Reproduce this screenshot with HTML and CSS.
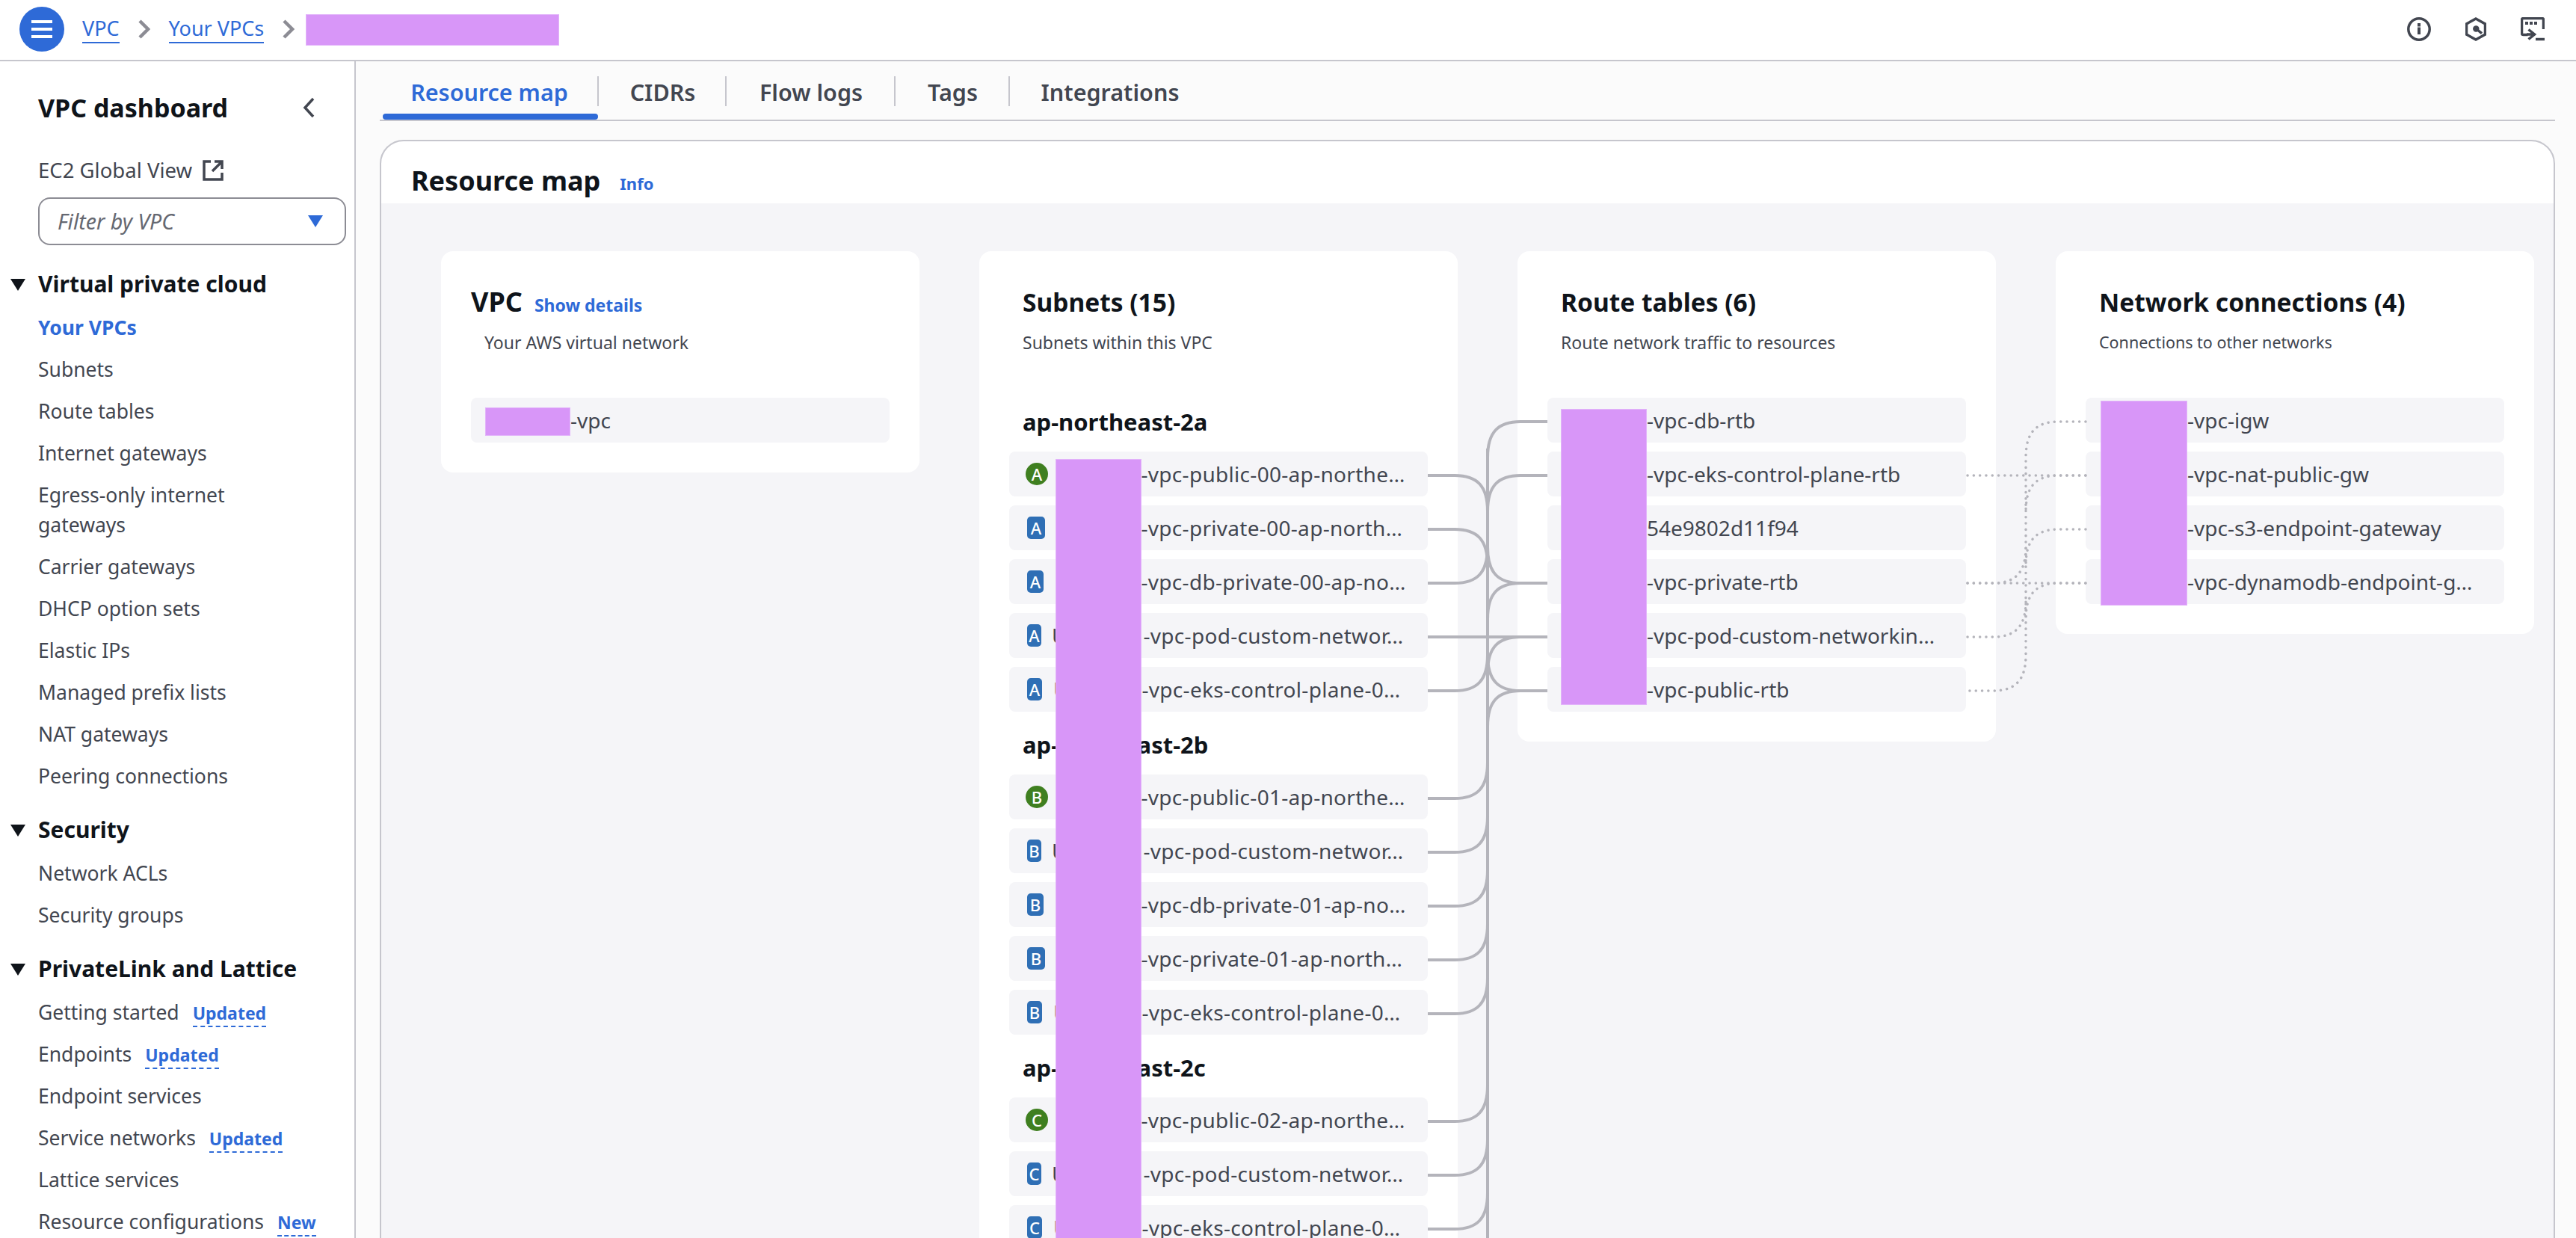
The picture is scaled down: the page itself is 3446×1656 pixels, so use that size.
FILE: index.html
```html
<!DOCTYPE html>
<html lang="en">
<head>
<meta charset="utf-8">
<title>Resource map</title>
<link rel="stylesheet" href="styles.css">
</head>
<body>
<header class="topbar">
  <button class="menu-btn" aria-label="Menu">
    <svg width="28" height="24" viewBox="0 0 28 24"><path d="M0 2h28M0 12h28M0 22h28" stroke="#fff" stroke-width="4" fill="none"/></svg>
  </button>
  <nav class="crumbs">
    <a class="crumb">VPC</a>
    <svg class="crumb-sep" width="16" height="26" viewBox="0 0 16 26"><path d="M2 2l11 11L2 24" stroke="#8c8c94" stroke-width="4.5" fill="none"/></svg>
    <a class="crumb">Your VPCs</a>
    <svg class="crumb-sep" width="16" height="26" viewBox="0 0 16 26"><path d="M2 2l11 11L2 24" stroke="#8c8c94" stroke-width="4.5" fill="none"/></svg>
    <span class="redact redact-crumb"></span>
  </nav>
  <div class="top-icons">
    <svg width="32" height="32" viewBox="0 0 32 32"><circle cx="16" cy="16" r="14.200" stroke="#424650" stroke-width="3.500" fill="none"/><path d="M14 8h4v4.500h-4zM14 13.500h4V23h-4z" fill="#424650"/></svg>
    <svg width="28" height="32" viewBox="0 0 28 32"><path d="M14 2l12.500 7v14L14 30 1.500 23V9z" stroke="#424650" stroke-width="3.500" fill="none"/><circle cx="14.300" cy="15.500" r="4.200" fill="#424650"/><path d="M15 16l7 5.600" stroke="#424650" stroke-width="3.500"/></svg>
    <svg width="32" height="32" viewBox="0 0 32 32"><path d="M30.500 16V3.500a2 2 0 0 0-2-2h-25a2 2 0 0 0-2 2v18a2 2 0 0 0 2 2h6" stroke="#424650" stroke-width="3.500" fill="none"/><path d="M6 6h4v4H6zM12 6h4v4h-4zM18 6h4v4h-4z" fill="#424650"/><path d="M8 23h10M10.500 16.500l8 6.500-8 6.500" stroke="#424650" stroke-width="3.500" fill="none"/><path d="M20 29.500h12" stroke="#424650" stroke-width="3.500"/></svg>
  </div>
</header>
<div class="page">
  <aside class="sidenav">
    <div class="nav-title-row">
      <h2 class="nav-title">VPC dashboard</h2>
      <svg width="18" height="28" viewBox="0 0 18 28"><path d="M15 2L4 14l11 12" stroke="#424650" stroke-width="3.500" fill="none"/></svg>
    </div>
    <div class="global-link">EC2 Global View
      <svg width="28" height="28" viewBox="0 0 28 28"><path d="M11 2H2v24h24v-9M16 2h10v10M26 2L13 15" stroke="#424650" stroke-width="3.500" fill="none"/></svg>
    </div>
    <div class="filter"><span class="filter-text">Filter by VPC</span><span class="caret-blue"></span></div>

    <div class="nav-sec sec-first"><span class="caret-dark"></span>Virtual private cloud</div>
    <a class="nav-item active">Your VPCs</a>
    <a class="nav-item">Subnets</a>
    <a class="nav-item">Route tables</a>
    <a class="nav-item">Internet gateways</a>
    <a class="nav-item">Egress-only internet gateways</a>
    <a class="nav-item">Carrier gateways</a>
    <a class="nav-item">DHCP option sets</a>
    <a class="nav-item">Elastic IPs</a>
    <a class="nav-item">Managed prefix lists</a>
    <a class="nav-item">NAT gateways</a>
    <a class="nav-item">Peering connections</a>

    <div class="nav-sec"><span class="caret-dark"></span>Security</div>
    <a class="nav-item">Network ACLs</a>
    <a class="nav-item">Security groups</a>

    <div class="nav-sec"><span class="caret-dark"></span>PrivateLink and Lattice</div>
    <a class="nav-item">Getting started<span class="tag">Updated</span></a>
    <a class="nav-item">Endpoints<span class="tag">Updated</span></a>
    <a class="nav-item">Endpoint services</a>
    <a class="nav-item">Service networks<span class="tag">Updated</span></a>
    <a class="nav-item">Lattice services</a>
    <a class="nav-item">Resource configurations<span class="tag">New</span></a>
  </aside>

  <main class="content">
    <div class="tabs">
      <div class="tab active"><span>Resource map</span></div>
      <div class="tab"><span>CIDRs</span></div>
      <div class="tab"><span>Flow logs</span></div>
      <div class="tab"><span>Tags</span></div>
      <div class="tab last"><span>Integrations</span></div>
    </div>

    <section class="panel">
      <div class="panel-head"><h2 class="panel-title">Resource map</h2><a class="info">Info</a></div>
      <div class="map">
        <div class="col">
          <div class="col-head"><h3 class="col-title title-vpc">VPC</h3><a class="show">Show details</a></div>
          <p class="col-sub">Your AWS virtual network</p>
          <div class="rows">
            <div class="row row-vpc"><span class="pre pre-vpc"></span><span class="name">-vpc</span><span class="redact redact-vpc"></span></div>
          </div>
        </div>

        <div class="col">
          <h3 class="col-title col-pad">Subnets (15)</h3>
          <p class="col-sub">Subnets within this VPC</p>
          <h4 class="az az-first">ap-northeast-2a</h4>
          <div class="rows">
            <div class="row sn"><span class="slot"><i class="b pub">A</i></span><span class="pre"></span><span class="name">-vpc-public-00-ap-northe…</span></div>
            <div class="row sn"><span class="slot"><i class="b w24">A</i></span><span class="pre"></span><span class="name">-vpc-private-00-ap-north…</span></div>
            <div class="row sn"><span class="slot"><i class="b w22">A</i></span><span class="pre"></span><span class="name">-vpc-db-private-00-ap-no…</span></div>
            <div class="row sn"><span class="slot"><i class="b w19">A</i></span><span class="pre pre-pod">U</span><span class="name">-vpc-pod-custom-networ…</span></div>
            <div class="row sn"><span class="slot"><i class="b w20">A</i></span><span class="pre pre-eks">U</span><span class="name">-vpc-eks-control-plane-0…</span></div>
          </div>
          <h4 class="az az-next">ap-northeast-2b</h4>
          <div class="rows">
            <div class="row sn"><span class="slot"><i class="b pub">B</i></span><span class="pre"></span><span class="name">-vpc-public-01-ap-northe…</span></div>
            <div class="row sn"><span class="slot"><i class="b w19">B</i></span><span class="pre pre-pod">U</span><span class="name">-vpc-pod-custom-networ…</span></div>
            <div class="row sn"><span class="slot"><i class="b w22">B</i></span><span class="pre"></span><span class="name">-vpc-db-private-01-ap-no…</span></div>
            <div class="row sn"><span class="slot"><i class="b w24">B</i></span><span class="pre"></span><span class="name">-vpc-private-01-ap-north…</span></div>
            <div class="row sn"><span class="slot"><i class="b w20">B</i></span><span class="pre pre-eks">U</span><span class="name">-vpc-eks-control-plane-0…</span></div>
          </div>
          <h4 class="az az-next">ap-northeast-2c</h4>
          <div class="rows">
            <div class="row sn"><span class="slot"><i class="b pub">C</i></span><span class="pre"></span><span class="name">-vpc-public-02-ap-northe…</span></div>
            <div class="row sn"><span class="slot"><i class="b w19">C</i></span><span class="pre pre-pod">U</span><span class="name">-vpc-pod-custom-networ…</span></div>
            <div class="row sn"><span class="slot"><i class="b w20">C</i></span><span class="pre pre-eks">U</span><span class="name">-vpc-eks-control-plane-0…</span></div>
          </div>
          <span class="redact redact-sn"></span>
        </div>

        <div class="col">
          <h3 class="col-title col-pad">Route tables (6)</h3>
          <p class="col-sub">Route network traffic to resources</p>
          <div class="rows">
            <div class="row"><span class="pre pre-rt"></span><span class="name">-vpc-db-rtb</span></div>
            <div class="row"><span class="pre pre-rt"></span><span class="name">-vpc-eks-control-plane-rtb</span></div>
            <div class="row"><span class="pre pre-rt"></span><span class="name">54e9802d11f94</span></div>
            <div class="row"><span class="pre pre-rt"></span><span class="name">-vpc-private-rtb</span></div>
            <div class="row"><span class="pre pre-rt"></span><span class="name">-vpc-pod-custom-networkin…</span></div>
            <div class="row"><span class="pre pre-rt"></span><span class="name">-vpc-public-rtb</span></div>
          </div>
          <span class="redact redact-rt"></span>
        </div>

        <div class="col">
          <h3 class="col-title col-pad">Network connections (4)</h3>
          <p class="col-sub sub-net">Connections to other networks</p>
          <div class="rows">
            <div class="row"><span class="pre pre-net"></span><span class="name">-vpc-igw</span></div>
            <div class="row"><span class="pre pre-net"></span><span class="name">-vpc-nat-public-gw</span></div>
            <div class="row"><span class="pre pre-net"></span><span class="name">-vpc-s3-endpoint-gateway</span></div>
            <div class="row"><span class="pre pre-net"></span><span class="name">-vpc-dynamodb-endpoint-g…</span></div>
          </div>
          <span class="redact redact-net"></span>
        </div>

        <svg class="links" width="1600" height="1400" viewBox="1900 532 1600 1400">
          <g class="solid">
            <path d="M1990 600V1700"/>
            <path d="M2070 564H2034C2004 564 1990 578 1990 612"/>
            <path d="M2070 636H2034C2004 636 1990 650 1990 684"/>
            <path d="M1990 732C1990 766 2004 780 2034 780H2070"/>
            <path d="M1990 828C1990 794 2004 780 2034 780"/>
            <path d="M1910 852H2070"/>
            <path d="M1990 900C1990 866 2004 852 2034 852"/>
            <path d="M1990 876C1990 910 2004 924 2034 924H2070"/>
            <path d="M1990 972C1990 938 2004 924 2034 924"/>
            <path d="M1910 636H1946C1976 636 1990 650 1990 684"/>
            <path d="M1910 708H1946C1976 708 1990 722 1990 756"/>
            <path d="M1910 780H1946C1976 780 1990 766 1990 732"/>
            <path d="M1910 924H1946C1976 924 1990 910 1990 876"/>
            <path d="M1910 1068H1946C1976 1068 1990 1054 1990 1020"/>
            <path d="M1910 1140H1946C1976 1140 1990 1126 1990 1092"/>
            <path d="M1910 1212H1946C1976 1212 1990 1198 1990 1164"/>
            <path d="M1910 1284H1946C1976 1284 1990 1270 1990 1236"/>
            <path d="M1910 1356H1946C1976 1356 1990 1342 1990 1308"/>
            <path d="M1910 1500H1946C1976 1500 1990 1486 1990 1452"/>
            <path d="M1910 1572H1946C1976 1572 1990 1558 1990 1524"/>
            <path d="M1910 1644H1946C1976 1644 1990 1630 1990 1596"/>
          </g>
          <g class="dotted">
            <path d="M2790 564H2754C2724 564 2710 578 2710 612V876C2710 910 2696 924 2666 924H2632"/>
            <path d="M2632 636H2790"/>
            <path d="M2790 636H2754C2724 636 2710 650 2710 684"/>
            <path d="M2790 708H2754C2724 708 2710 722 2710 756"/>
            <path d="M2632 780H2790"/>
            <path d="M2632 780H2666C2696 780 2710 766 2710 732"/>
            <path d="M2790 780H2754C2724 780 2710 794 2710 828"/>
            <path d="M2632 852H2666C2696 852 2710 838 2710 804"/>
          </g>
        </svg>
      </div>
    </section>
  </main>
</div>
</body>
</html>
```
FILE: styles.css
```css
* { box-sizing: border-box; }
html, body { margin: 0; padding: 0; width: 3446px; height: 1656px; overflow: hidden; }
body { font-family: "Noto Sans", "Open Sans", sans-serif; font-size: 28px; line-height: 40px; color: #424650; background: #fff; }
h2, h3, h4, p { margin: 0; }

.redact { position: absolute; background: #d896f8; border: 1px solid #e2b4fa; display: block; }

.topbar { height: 82px; border-bottom: 2px solid #c6c6cd; display: flex; align-items: center; padding: 0 42px 2px 26px; background: #fff; }
.menu-btn { width: 60px; height: 60px; border-radius: 50%; border: 0; padding: 0; background: #2e6ad7; display: flex; align-items: center; justify-content: center; flex: none; }
.crumbs { display: flex; align-items: center; margin-left: 24px; gap: 25px; flex: 1; position: relative; }
.crumb { color: #2e6ad7; border-bottom: 2px solid #2e6ad7; line-height: 36px; font-size: 27px; }
.crumb-sep { flex: none; }
.redact-crumb { left: 299px; top: -1px; width: 339px; height: 42px; }
.top-icons { display: flex; gap: 46px; align-items: center; }

.page { display: flex; height: 1574px; overflow: hidden; }
.sidenav { width: 476px; flex: none; border-right: 2px solid #c6c6cd; padding: 40px 12px 0 51px; background: #fff; overflow: hidden; }
.nav-title-row { display: flex; justify-content: space-between; align-items: center; height: 44px; padding-right: 40px; }
.nav-title { font-size: 34px; line-height: 44px; font-weight: 700; color: #0f141a; }
.global-link { margin-top: 42px; display: flex; align-items: center; gap: 14px; font-size: 27.500px; }
.filter { margin-top: 16px; width: 412px; height: 64px; border: 2px solid #8c8c94; border-radius: 16px; display: flex; align-items: center; justify-content: space-between; padding: 0 29px 0 24px; }
.filter-text { font-style: italic; color: #656871; font-size: 28.500px; }
.caret-blue { width: 0; height: 0; border-left: 10px solid transparent; border-right: 10px solid transparent; border-top: 16px solid #2e6ad7; }
.nav-sec { position: relative; font-size: 30px; line-height: 44px; font-weight: 700; color: #0f141a; margin-top: 30px; margin-bottom: 16px; }
.sec-first { margin-top: 30px; margin-bottom: 16px; }
.caret-dark { position: absolute; left: -37px; top: 15px; width: 0; height: 0; border-left: 10px solid transparent; border-right: 10px solid transparent; border-top: 16px solid #0f141a; }
.nav-item { display: block; color: #424650; font-size: 26.500px; margin-bottom: 16px; width: 340px; white-space: normal; }
.nav-item:has(.tag) { width: 420px; white-space: nowrap; }
.nav-item.active { color: #2e6ad7; font-weight: 700; }
.tag { margin-left: 18px; color: #2e6ad7; font-size: 23px; font-weight: 700; border-bottom: 2px dashed #2e6ad7; line-height: 34px; display: inline-block; }

.content { flex: 1; background: #fbfbfb; padding: 0 28px 0 32px; min-width: 0; overflow: hidden; }
.tabs { display: flex; height: 80px; border-bottom: 2px solid #c6c6cd; }
.tab { height: 78px; padding: 20px 0 0 0; position: relative; font-size: 30.500px; font-weight: 600; color: #424650; line-height: 42px; display: flex; justify-content: center; }
.tab:nth-child(1) { width: 293px; color: #2e6ad7; }
.tab:nth-child(2) { width: 171px; }
.tab:nth-child(3) { width: 226px; }
.tab:nth-child(4) { width: 153px; }
.tab:nth-child(5) { width: 268px; }
.tab::after { content: ""; position: absolute; right: 0; top: 20px; height: 40px; width: 2px; background: #c6c6cd; }
.tab.last::after { display: none; }
.tab.active::before { content: ""; position: absolute; left: 4px; right: 1px; bottom: 0; height: 8px; border-radius: 4px; background: #2e6ad7; }

.panel { margin-top: 25px; height: 1500px; border: 2px solid #c6c6cd; border-radius: 32px; overflow: hidden; background: #fff; }
.panel-head { height: 83px; display: flex; align-items: center; padding: 22px 0 0 40px; gap: 26px; }
.panel-title { font-size: 36px; line-height: 44px; font-weight: 700; color: #0f141a; }
.info { color: #2e6ad7; font-size: 22px; font-weight: 700; margin-top: 6px; }
.map { position: relative; display: flex; gap: 80px; align-items: flex-start; background: #f5f5f8; height: 1420px; padding: 64px 0 0 80px; overflow: hidden; }
.col { width: 640px; flex: none; background: #fff; border-radius: 16px; padding: 46px 40px 40px; position: relative; }
.col-head { display: flex; align-items: baseline; gap: 16px; height: 44px; }
.col-title { font-size: 33.500px; line-height: 44px; font-weight: 700; color: #0f141a; }
.title-vpc { font-size: 36px; }
.col-pad { padding-left: 18px; }
.show { color: #2e6ad7; font-size: 23px; font-weight: 700; }
.col-sub { font-size: 23px; line-height: 32px; color: #424650; margin-top: 16px; padding-left: 18px; margin-bottom: 58px; }
.sub-net { font-size: 21.500px; }
.az { font-size: 31px; line-height: 44px; font-weight: 700; color: #0f141a; padding-left: 18px; margin-bottom: 18px; }
.az-first { padding-top: 10px; }
.az-next { margin-top: 22px; }
.rows { display: flex; flex-direction: column; gap: 12px; }
.row { height: 60px; background: #f5f5f8; border-radius: 8px; display: flex; align-items: center; padding-left: 18px; white-space: nowrap; overflow: hidden; position: relative; }
.sn { padding-left: 22px; }
.sn .name { letter-spacing: 0.300px; }
.slot { flex: none; width: 30px; display: block; }
.b { height: 30px; background: #2f6fb5; color: #fff; border-radius: 5px; font-style: normal; font-size: 22px; line-height: 30px; font-weight: 500; display: flex; justify-content: center; margin-left: 2px; overflow: hidden; }
.b.pub { width: 30px; border-radius: 50%; background: #3f7f20; margin-left: 0; }
.w24 { width: 24px; }
.w22 { width: 22px; }
.w20 { width: 20px; }
.w19 { width: 19px; }
.pre { display: block; flex: none; width: 124.500px; overflow: hidden; }
.pre-pod { width: 127.500px; padding-left: 5px; }
.pre-eks { width: 125.500px; padding-left: 7px; }
.pre-vpc { width: 115px; }
.pre-rt { width: 115px; }
.pre-net { width: 118px; }
.name { flex: none; }
.redact-sn { left: 102px; top: 278px; width: 115px; height: 1100px; }
.redact-rt { left: 58px; top: 211px; width: 115px; height: 396px; }
.redact-net { left: 60px; top: 200px; width: 116px; height: 274px; }
.redact-vpc { left: 19px; top: 13px; width: 114px; height: 38px; }

.links { position: absolute; left: 1390px; top: 260px; pointer-events: none; overflow: visible; }
.solid path { fill: none; stroke: #b4b4bb; stroke-width: 4; }
.dotted path { fill: none; stroke: #b4b4bb; stroke-width: 3.500; stroke-linecap: round; stroke-dasharray: 0.100 8.200; }
```
